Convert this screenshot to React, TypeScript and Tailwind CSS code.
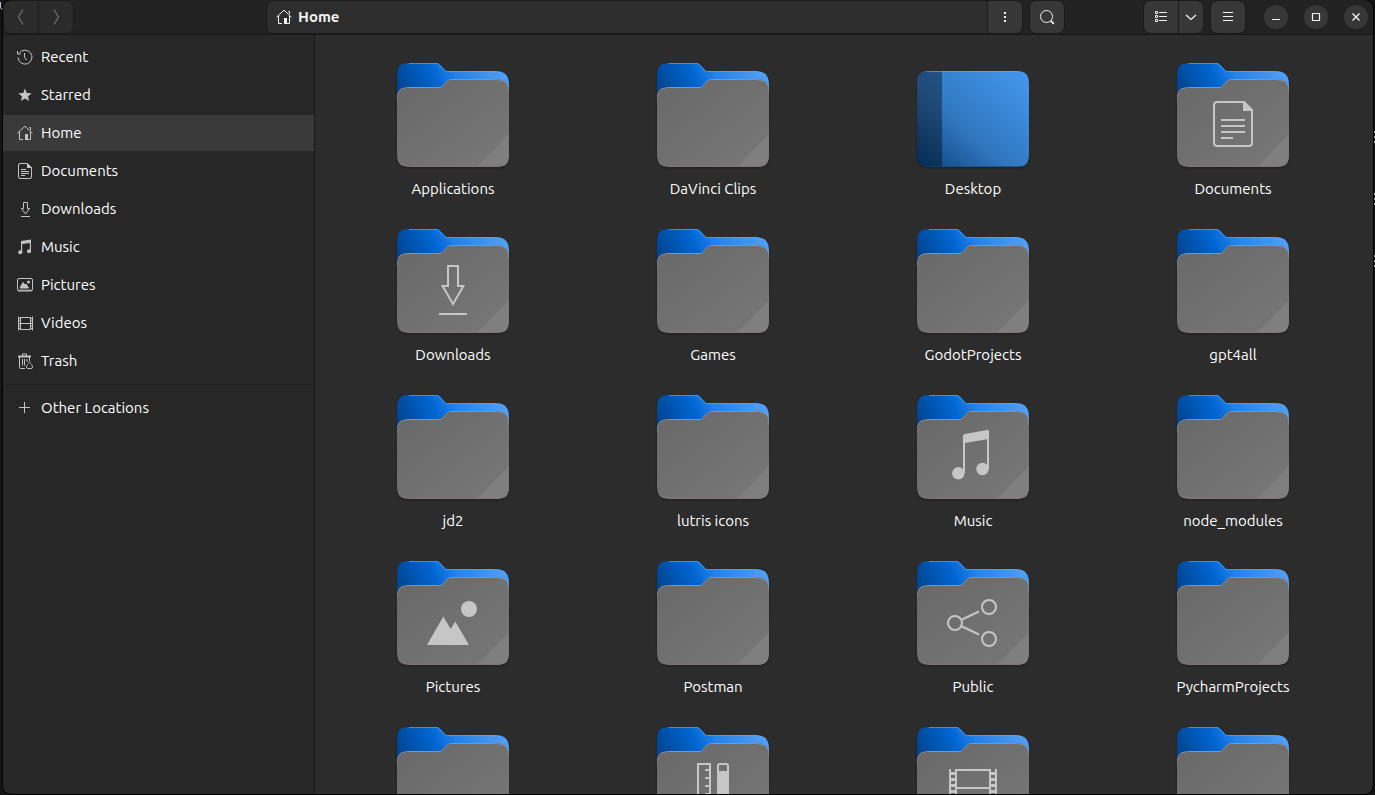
import type { ReactNode } from "react";

type Place = "recent" | "star" | "home" | "document" | "download" | "music" | "picture" | "video" | "trash" | "plus";
type Emblem = "document" | "download" | "music" | "picture" | "share" | "template" | "video";

const places: { name: string; icon: Place }[] = [
  { name: "Recent", icon: "recent" },
  { name: "Starred", icon: "star" },
  { name: "Home", icon: "home" },
  { name: "Documents", icon: "document" },
  { name: "Downloads", icon: "download" },
  { name: "Music", icon: "music" },
  { name: "Pictures", icon: "picture" },
  { name: "Videos", icon: "video" },
  { name: "Trash", icon: "trash" },
];

const items: { name: string; emblem?: Emblem; desktop?: boolean }[] = [
  { name: "Applications" },
  { name: "DaVinci Clips" },
  { name: "Desktop", desktop: true },
  { name: "Documents", emblem: "document" },
  { name: "Downloads", emblem: "download" },
  { name: "Games" },
  { name: "GodotProjects" },
  { name: "gpt4all" },
  { name: "jd2" },
  { name: "lutris icons" },
  { name: "Music", emblem: "music" },
  { name: "node_modules" },
  { name: "Pictures", emblem: "picture" },
  { name: "Postman" },
  { name: "Public", emblem: "share" },
  { name: "PycharmProjects" },
  { name: "" },
  { name: "", emblem: "template" },
  { name: "", emblem: "video" },
  { name: "" },
];

const glyphs: Record<Place, ReactNode> = {
  recent: (
    <>
      <path d="M2.2 4.2A7 7 0 1 1 1 8.5" />
      <path d="M.5 2v3h3.2M7.5 4v4.2l2 2.8" />
    </>
  ),
  star: <path d="M8 1.5l1.8 4.4 4.8.4-3.6 3.1 1.1 4.7L8 11.6l-4.1 2.5L5 9.4 1.4 6.3l4.8-.4z" fill="currentColor" stroke="none" />,
  home: (
    <>
      <path d="M.5 8.2 8 1.2l7.5 7M2.5 7v7.5H6M10.5 14.5h3V7M13.5 5V2.5h-1.2" />
      <path d="M8 9h3v6H8z" fill="currentColor" stroke="none" />
    </>
  ),
  document: (
    <>
      <path d="M3 .5h7.5l4 4V14a1.5 1.5 0 0 1-1.5 1.5H3A1.5 1.5 0 0 1 1.5 14V2A1.5 1.5 0 0 1 3 .5z" />
      <path d="M10 0v5h5z" fill="currentColor" stroke="none" />
      <path d="M4 6.5h5M4 8.5h8M4 10.5h8M4 12.5h4" />
    </>
  ),
  download: <path d="M6.5 1.5h4v6h2L8.500 13 4.500 7.500h2zM4 15.500h9" />,
  music: (
    <>
      <path d="M4 2l10-1.500V12h-1.200V4L5.200 5v8.500H4z" fill="currentColor" stroke="none" />
      <circle cx="3.200" cy="13.300" r="2" fill="currentColor" stroke="none" />
      <circle cx="12" cy="12.200" r="2" fill="currentColor" stroke="none" />
    </>
  ),
  picture: (
    <>
      <rect x=".5" y="1.500" width="15" height="12.500" rx="1.500" />
      <path d="M1 13.200h14M3 11l3-5.500 1.800 2.500L9 7l2.500 4z" fill="currentColor" />
      <circle cx="11.500" cy="5" r="1.500" fill="currentColor" stroke="none" />
    </>
  ),
  video: (
    <>
      <path d="M3.500 2v13M13.500 2v13M3.500 2.500h10M3.500 8.500h10M3.500 14.500h10M1.500 1.500v14M15.500 1.500v14" />
      <path d="M1.500 3.500h2M1.500 6h2M1.500 8.500h2M1.500 11h2M1.500 13.500h2M13.500 3.500h2M13.500 6h2M13.500 8.500h2M13.500 11h2M13.500 13.500h2" />
    </>
  ),
  trash: (
    <>
      <path d="M1 3.500h13M5.500 3V1h4v2M2.500 4v10.500a1 1 0 0 0 1 1H8M12.500 4v4M5.500 6v6.500M7.500 6v6.500M10 6v3" />
      <path d="M1 2.500h13v2H1z" fill="currentColor" stroke="none" />
      <path d="M11 10.500l1.500-1.300 1.500 1.300M10.500 11.500l-1.200 2.300 1 1.700h4.400l1-1.700-1.200-2.300" />
    </>
  ),
  plus: <path d="M7.500 2v11M2 7.500h11" />,
};

function Glyph({ icon }: { icon: Place }) {
  return (
    <svg viewBox="0 0 16 16" className="size-4 shrink-0" fill="none" stroke="currentColor" aria-hidden="true">
      {glyphs[icon]}
    </svg>
  );
}

const emblems: Record<Emblem, ReactNode> = {
  document: (
    <>
      <path d="M48 55h27l8 8v33a3 3 0 0 1-3 3H48a3 3 0 0 1-3-3V58a3 3 0 0 1 3-3z" />
      <path d="M74 54v10h10z" fill="#c6c6c6" stroke="none" />
      <path d="M52 73h24M52 79h24M52 85h24M52 91h12" />
    </>
  ),
  download: <path d="M59 53h10v20h5.400L64 91 53.600 73H59zM50 101h28" />,
  music: (
    <g fill="#c6c6c6" stroke="none">
      <path d="M54 57q0-2 2-2l22-4q2-.4 2 1v38h-2V60.300L56 64v30h-2z" />
      <circle cx="49.300" cy="94.300" r="6.200" />
      <circle cx="73.500" cy="90" r="6.200" />
    </g>
  ),
  picture: (
    <g fill="#c6c6c6" stroke="none">
      <circle cx="80" cy="64" r="8" />
      <path d="M38 100l16.300-28.500L61.700 84l4.600-7.500L80 100z" />
    </g>
  ),
  share: (
    <>
      <circle cx="46" cy="78" r="7" />
      <circle cx="80" cy="62" r="7" />
      <circle cx="80" cy="94" r="7" />
      <path d="M53 74.500l17-8M53 81.500l17 8" />
    </>
  ),
  template: (
    <>
      <path d="M49 53h12v50H49zM61 59h-5M61 67h-5M61 75h-5M61 83h-5M69 60v-5q0-2 2-2h6q2 0 2 2v5" />
      <path d="M68 60h12v40H68z" fill="#c6c6c6" stroke="none" />
    </>
  ),
  video: (
    <>
      <path d="M41 58v40M47 58v40M81 58v40M87 58v40M47 59h34M47 77h34M47 97h34" />
      <path d="M42 62.500h4M42 68.500h4M42 74.500h4M42 80.500h4M42 86.500h4M82 62.500h4M82 68.500h4M82 74.500h4M82 80.500h4M82 86.500h4" strokeWidth="3" />
    </>
  ),
};

const backShape =
  "M8 30C8 19 11 16 20 16H48Q49.500 16 50.500 17L57 24H104C116 24 120 28 120 38V60H8z";
const frontShape =
  "M8 53C8 43 11 40 21 40H51Q52 40 53 39L58.500 33.500Q60 32 62 32H104C116 32 120 35 120 46V106C120 117 117 120 106 120H22C11 120 8 117 8 106z";

function PaintDefs() {
  return (
    <svg width="0" height="0" className="absolute" aria-hidden="true">
      <defs>
        <linearGradient id="back" gradientUnits="userSpaceOnUse" x1="12" y1="54" x2="112" y2="10">
          <stop offset="0" stopColor="#00428c" />
          <stop offset=".37" stopColor="#0066d2" />
          <stop offset=".55" stopColor="#2382ec" />
          <stop offset="1" stopColor="#53a0f5" />
        </linearGradient>
        <linearGradient id="front" x1="0" y1="0" x2="1" y2="1">
          <stop offset="0" stopColor="#686868" />
          <stop offset="1" stopColor="#787878" />
        </linearGradient>
        <linearGradient id="desk" x1="0" y1="1" x2="1" y2="0">
          <stop offset="0" stopColor="#00488a" />
          <stop offset=".16" stopColor="#195696" />
          <stop offset=".4" stopColor="#3075bd" />
          <stop offset=".65" stopColor="#3985d3" />
          <stop offset="1" stopColor="#4398ef" />
        </linearGradient>
        <clipPath id="frontClip">
          <path d={frontShape} />
        </clipPath>
        <clipPath id="deskClip">
          <path d="M8 38C8 27 11 24 22 24H106C117 24 120 27 120 38V106C120 117 117 120 106 120H22C11 120 8 117 8 106z" />
        </clipPath>
      </defs>
    </svg>
  );
}

function Folder({ emblem }: { emblem?: Emblem }) {
  return (
    <svg viewBox="0 0 128 128" className="size-32 drop-shadow-[0_1px_1px_rgba(0,0,0,0.3)]" aria-hidden="true">
      <path d={backShape} fill="url(#back)" />
      <path d="M20 16.500H48.500L57 24.500H104Q112 24.500 116 27" fill="none" stroke="#5aa9ff" strokeOpacity=".65" />
      <path d={frontShape} fill="url(#front)" />
      <g clipPath="url(#frontClip)">
        <path d="M87 121L121 86v35z" fill="#7f7f7f" />
        <path d="M8 53C8 43 11 40.500 21 40.500H52L60 32.500H104C116 32.500 120 35 120 46" fill="none" stroke="#929292" />
        <path d="M14 117Q17 119.500 22 119.500H106Q111 119.500 114 117" fill="none" stroke="#827574" />
      </g>
      {emblem && (
        <g fill="none" stroke="#c6c6c6" strokeWidth="2">
          {emblems[emblem]}
        </g>
      )}
    </svg>
  );
}

function DesktopIcon() {
  return (
    <svg viewBox="0 0 128 128" className="size-32 drop-shadow-[0_1px_1px_rgba(0,0,0,0.3)]" aria-hidden="true">
      <g clipPath="url(#deskClip)">
        <path d="M8 24h112v96H8z" fill="url(#desk)" />
        <path d="M8 24h25v96H8z" fill="#000" fillOpacity=".37" />
        <path d="M8 24.500h112" stroke="#61b0ff" strokeOpacity=".6" />
        <path d="M8 119.500h112" stroke="#154675" strokeOpacity=".6" />
      </g>
    </svg>
  );
}

const raised = "flex h-8 items-center justify-center bg-[#373737] outline outline-[#1b1b1b]";
const round = "flex size-6 items-center justify-center rounded-full bg-[#373737]";

function TitleBar() {
  return (
    <header className="flex h-[35px] shrink-0 items-center border-b border-[#181818] bg-[#222222] pr-[5px] pl-px text-[#f2f2f2]">
      <div className="flex gap-px">
        <button aria-label="Back" className="flex h-8 w-[34px] items-center justify-center rounded-l-md bg-[#2b2b2b] text-[#858585] outline outline-[#1b1b1b]">
          <svg viewBox="0 0 16 16" className="size-4" fill="none" stroke="currentColor"><path d="M10 .5 5.500 8l4.500 7.500" /></svg>
        </button>
        <button aria-label="Forward" className="flex h-8 w-[34px] items-center justify-center rounded-r-md bg-[#2b2b2b] text-[#858585] outline outline-[#1b1b1b]">
          <svg viewBox="0 0 16 16" className="size-4" fill="none" stroke="currentColor"><path d="M6 .5 10.500 8 6 15.500" /></svg>
        </button>
      </div>
      <div className="ml-[194px] flex flex-1 gap-px">
        <button className="flex h-8 flex-1 items-center gap-1.5 rounded-l-md bg-[#2d2d2d] px-[9px] text-[15px] font-bold outline outline-[#1b1b1b]">
          <Glyph icon="home" />
          Home
        </button>
        <button aria-label="Path options" className={`${raised} w-[34px] rounded-r-md`}>
          <svg viewBox="0 0 16 16" className="size-4" fill="currentColor"><path d="M7 3h2v2H7zM7 7h2v2H7zM7 11h2v2H7z" /></svg>
        </button>
      </div>
      <button aria-label="Search" className={`${raised} ml-2 w-[34px] rounded-md`}>
        <svg viewBox="0 0 16 16" className="size-4" fill="none" stroke="currentColor"><circle cx="7.500" cy="7.500" r="6" /><path d="M11.800 11.800l3 3" strokeWidth="1.800" /></svg>
      </button>
      <div className="ml-20 flex gap-px">
        <button aria-label="List view" className={`${raised} w-[34px] rounded-l-md`}>
          <svg viewBox="0 0 16 16" className="size-4" fill="none" stroke="currentColor"><path d="M2.500 2.500h2v2h-2zM2.500 6.500h2v2h-2zM2.500 10.500h2v2h-2zM6 3.500h8M6 7.500h8M6 11.500h8" /></svg>
        </button>
        <button aria-label="View options" className={`${raised} w-6 rounded-r-md`}>
          <svg viewBox="0 0 16 16" className="size-4" fill="none" stroke="currentColor"><path d="M3 6l5 4.500L13 6" strokeWidth="1.300" /></svg>
        </button>
      </div>
      <button aria-label="Menu" className={`${raised} ml-2 w-[34px] rounded-md`}>
        <svg viewBox="0 0 16 16" className="size-4" fill="none" stroke="currentColor"><path d="M3 3.500h10M3 7.500h10M3 11.500h10" /></svg>
      </button>
      <div className="ml-[19px] flex gap-4">
        <button aria-label="Minimize" className={round}>
          <svg viewBox="0 0 16 16" className="size-4" fill="none" stroke="currentColor"><path d="M4 10.500h8" /></svg>
        </button>
        <button aria-label="Maximize" className={round}>
          <svg viewBox="0 0 16 16" className="size-4" fill="none" stroke="currentColor" strokeWidth="1.200"><path d="M4.500 4.500h7v7h-7z" /></svg>
        </button>
        <button aria-label="Close" className={round}>
          <svg viewBox="0 0 16 16" className="size-4" fill="none" stroke="currentColor"><path d="M4.500 4.500l7 7M11.500 4.500l-7 7" strokeWidth="1.400" /></svg>
        </button>
      </div>
    </header>
  );
}

function Sidebar() {
  return (
    <nav className="w-[312px] shrink-0 border-r border-[#181818] bg-[#272727] pt-1">
      <ul className="flex flex-col gap-0.5">
        {places.map((place) => (
          <li key={place.name}>
            <a
              href="#"
              aria-current={place.name === "Home" ? "page" : undefined}
              className="flex h-9 items-center gap-2 px-3.5 text-[#c4c4c4] aria-[current]:bg-[#3a3a3a]"
            >
              <Glyph icon={place.icon} />
              <span className="text-white">{place.name}</span>
            </a>
          </li>
        ))}
      </ul>
      <hr className="my-[5px] border-[#212121]" />
      <a href="#" className="flex h-9 items-center gap-2 px-3.5 text-[#c4c4c4]">
        <Glyph icon="plus" />
        <span className="text-white">Other Locations</span>
      </a>
    </nav>
  );
}

export default function App() {
  return (
    <div className="relative h-screen overflow-hidden bg-[#151515] pr-0.5 pb-px pl-[3px] font-['Ubuntu','Noto_Sans',sans-serif] text-[15px] leading-5">
      <PaintDefs />
      <svg viewBox="0 0 4 12" className="absolute top-0 left-0 h-3 w-1" fill="none" stroke="#b8c4d4" aria-hidden="true">
        <path d="M.5 2v5q0 2 2 2" />
      </svg>
      <svg viewBox="0 0 2 140" className="absolute top-[131px] right-0 h-[140px] w-0.5" fill="#a0a0a0" aria-hidden="true">
        <path d="M1 0h1v2H1zM1 5h1v2H1zM1 10h1v2H1zM1 62h1v2H1zM1 67h1v2H1zM1 72h1v2H1zM1 124h1v2H1zM1 129h1v2H1zM1 134h1v2H1z" />
      </svg>
      <div className="flex h-full flex-col overflow-hidden rounded-lg bg-[#2c2c2c] outline outline-black">
        <TitleBar />
        <div className="flex min-h-0 flex-1">
          <Sidebar />
          <main className="min-w-0 flex-1 overflow-hidden pt-3 pr-2.5 pl-2">
            <ul className="grid grid-cols-4 gap-y-3.5">
              {items.map((item, index) => (
                <li key={index} className="flex justify-center">
                  <button className="flex flex-col items-center gap-1 text-white" aria-label={item.name || "Folder"}>
                    {item.desktop ? <DesktopIcon /> : <Folder emblem={item.emblem} />}
                    {item.name && <span>{item.name}</span>}
                  </button>
                </li>
              ))}
            </ul>
          </main>
        </div>
      </div>
    </div>
  );
}
